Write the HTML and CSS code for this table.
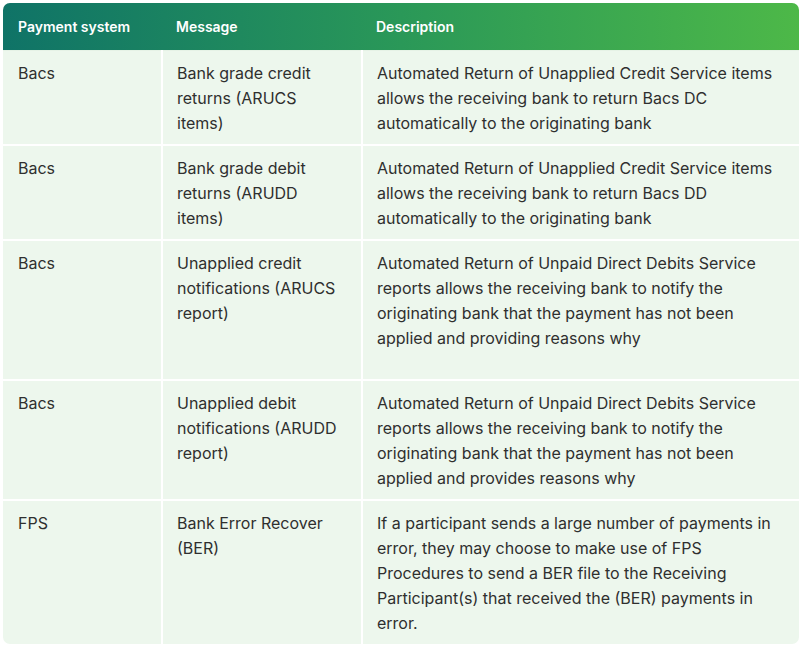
FILE: index.html
```html
<!DOCTYPE html>
<html>
<head>
<meta charset="utf-8">
<link rel="stylesheet" href="styles.css">
</head>
<body>
<div class="wrap">
<table class="tbl">
<colgroup><col class="c1"><col class="c2"><col class="c3"></colgroup>
<thead>
<tr><th>Payment system</th><th>Message</th><th>Description</th></tr>
</thead>
<tbody>
<tr><td>Bacs</td><td>Bank grade credit returns (ARUCS items)</td><td>Automated Return of Unapplied Credit Service items allows the receiving bank to return Bacs DC automatically to the originating bank</td></tr>
<tr><td>Bacs</td><td>Bank grade debit returns (ARUDD items)</td><td>Automated Return of Unapplied Credit Service items allows the receiving bank to return Bacs DD automatically to the originating bank</td></tr>
<tr class="tall"><td>Bacs</td><td>Unapplied credit notifications (ARUCS report)</td><td>Automated Return of Unpaid Direct Debits Service reports allows the receiving bank to notify the originating bank that the payment has not been applied and providing reasons why</td></tr>
<tr><td>Bacs</td><td>Unapplied debit notifications (ARUDD report)</td><td>Automated Return of Unpaid Direct Debits Service reports allows the receiving bank to notify the originating bank that the payment has not been applied and provides reasons why</td></tr>
<tr><td>FPS</td><td>Bank Error Recover (BER)</td><td>If a participant sends a large number of payments in error, they may choose to make use of FPS Procedures to send a BER file to the Receiving Participant(s) that received the (BER) payments in error.</td></tr>
</tbody>
</table>
</div>
</body>
</html>
```
FILE: styles.css
```css
html, body { margin: 0; padding: 0; background: #fff; }
body { padding: 3px 1px 0 3px; font-family: Inter, "Open Sans", sans-serif; }
.wrap {
  border-radius: 7px;
  overflow: hidden;
  background: #edf7ed;
}
.tbl {
  width: 100%;
  border-collapse: collapse;
  table-layout: fixed;
}
.c1 { width: 159px; }
.c2 { width: 200px; }
.tbl th {
  height: 47px;
  padding: 0 14px;
  text-align: left;
  color: #fff;
  font-size: 14px;
  font-weight: 600;
  border-bottom: 1px solid #e6f2e6;
}
.tbl th:first-child { padding-left: 15px; }
.tbl thead tr { background: linear-gradient(90deg, #0f7367 0%, #2a9858 50%, #4db848 100%); }
.tbl td {
  vertical-align: top;
  padding: 10px 14px 8px 14px;
  font-size: 16px;
  line-height: 25px;
  color: #2f2f2f;
  border: 2px solid #fff;
  border-top: none;
}
.tbl td:first-child { padding-left: 15px; border-left: none; }
.tbl td:last-child { border-right: none; }
.tbl tr:last-child td { border-bottom: none; }
.tbl tr.tall td { padding-bottom: 28px; }
```
